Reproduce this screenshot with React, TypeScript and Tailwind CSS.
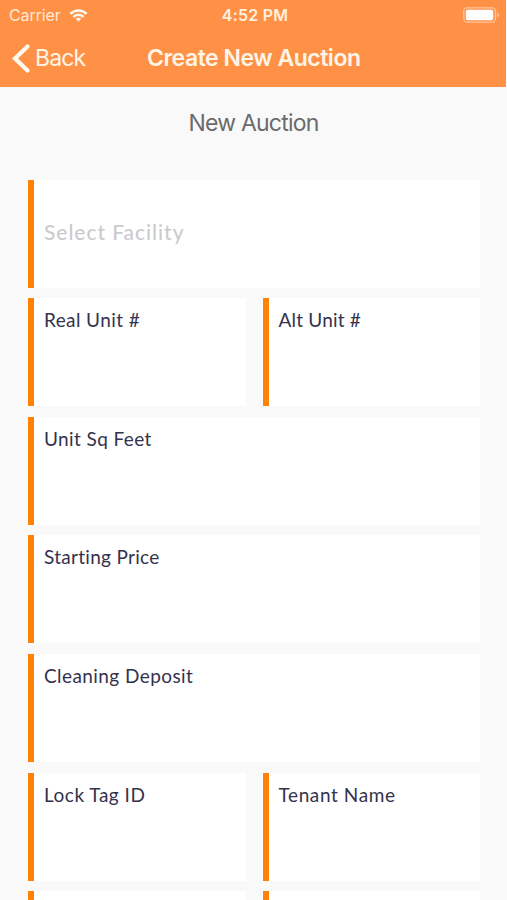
import React from 'react';

type FieldProps = {
  label: string;
  tracking?: string;
};

function Field({ label, tracking = '' }: FieldProps) {
  return (
    <div className="h-[108px] flex-1 border-l-6 border-[#ff8205] bg-white pl-[10px] pt-[9px]">
      <label className={`block whitespace-nowrap text-[19px] leading-[26px] text-[#34324d] ${tracking}`}>{label}</label>
    </div>
  );
}

function StatusBar() {
  return (
    <div className="grid h-[30px] grid-cols-3 items-center pl-[9px] pr-[7px] text-[16px] leading-5">
      <div className="flex items-center gap-2 text-[#ffe9d2]">
        <span className="tracking-[-0.1px]">Carrier</span>
        <svg width="19" height="13" viewBox="0 0 20 14" fill="none" stroke="#fffaf0" strokeWidth="2.7">
          <path d="M1.2 5.2C6.1 .3 13.9 .3 18.8 5.2" />
          <path d="M4.4 8.5C7.6 5.4 12.4 5.4 15.6 8.5" />
          <path d="M10 13.4L7 10.5C8.6 9 11.4 9 13 10.5Z" fill="#fffaf0" stroke="none" />
        </svg>
      </div>
      <span className="pl-[2px] text-center font-semibold tracking-[0.2px] text-[#fff0df]">4:52 PM</span>
      <svg className="-mr-px justify-self-end" width="37" height="16" viewBox="0 0 37 16">
        <rect x="0.8" y="0.8" width="31.6" height="14.4" rx="3.5" fill="none" stroke="#ffc49b" strokeWidth="1.3" />
        <rect x="2.8" y="2.8" width="27.4" height="10.4" rx="1.8" fill="#fff" />
        <path d="M34 5.5C36.5 6 36.5 10 34 10.5Z" fill="#ffc49b" />
      </svg>
    </div>
  );
}

export default function App() {
  return (
    <div className="h-[900px] w-[507px] overflow-hidden bg-[#f9f9f9] font-['Inter',sans-serif]">
      {/* Header */}
      <header className="mr-px h-[87px] bg-[#ff9147]">
        <StatusBar />
        <div className="grid h-[56px] grid-cols-[146px_1fr_146px] items-center">
          <button className="flex items-center gap-[5px] pl-[12px] text-[23px] leading-7 text-[#fff5e6]">
            <svg width="18" height="29" viewBox="0 0 18 29" fill="none" stroke="#fffaf0" strokeWidth="4.2" strokeLinecap="round">
              <path d="M15.5 2.5L3 14.5L15.5 26.5" />
            </svg>
            <span className="tracking-[-0.9px]">Back</span>
          </button>
          <h1 className="whitespace-nowrap pl-px text-center text-[23px] font-semibold leading-7 tracking-[-0.48px] text-[#fff5e6]">
            Create New Auction
          </h1>
        </div>
      </header>

      <h2 className="mt-[22px] text-center text-[23px] leading-7 tracking-[-0.8px] text-[#6b6b6b]">New Auction</h2>

      {/* Auction form */}
      <form className="ml-7 mr-[27px] mt-[42.6px] flex flex-col gap-[10.6px] font-['Lato',sans-serif]">
        <div className="flex h-[108px] items-center border-l-6 border-[#ff8205] bg-white pb-[3px] pl-[10px]">
          <span className="whitespace-nowrap text-[21px] font-medium leading-7 tracking-[0.95px] text-[#cbcbcd]">Select Facility</span>
        </div>
        <div className="flex gap-[17px]">
          <Field label="Real Unit #" tracking="tracking-[0.4px]" />
          <Field label="Alt Unit #" tracking="tracking-[0.2px]" />
        </div>
        <div className="flex">
          <Field label="Unit Sq Feet" tracking="tracking-[0.4px]" />
        </div>
        <div className="flex">
          <Field label="Starting Price" tracking="tracking-[0.3px]" />
        </div>
        <div className="flex">
          <Field label="Cleaning Deposit" tracking="tracking-[0.42px]" />
        </div>
        <div className="flex gap-[17px]">
          <Field label="Lock Tag ID" tracking="tracking-[0.5px]" />
          <Field label="Tenant Name" tracking="tracking-[0.6px]" />
        </div>
        <div className="flex gap-[17px]">
          <Field label="" />
          <Field label="" />
        </div>
      </form>
    </div>
  );
}
